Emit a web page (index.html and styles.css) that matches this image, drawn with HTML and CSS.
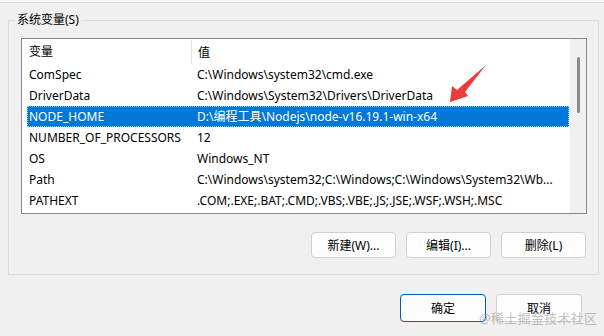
FILE: index.html
```html
<html>
<head>
<meta charset="utf-8">
<link rel="stylesheet" href="styles.css">
</head>
<body>
<div class="top-rule"></div>
<fieldset class="group">
    <legend>系统变量(S)</legend>
    <div class="listbox">
        <div class="list">
            <div class="list-head">
                <div class="col-name">变量</div>
                <div class="col-value">值</div>
            </div>
            <div class="row"><div class="col-name">ComSpec</div><div class="col-value">C:\Windows\system32\cmd.exe</div></div>
            <div class="row"><div class="col-name">DriverData</div><div class="col-value">C:\Windows\System32\Drivers\DriverData</div></div>
            <div class="row selected"><div class="col-name">NODE_HOME</div><div class="col-value">D:\编程工具\Nodejs\node-v16.19.1-win-x64</div></div>
            <div class="row"><div class="col-name">NUMBER_OF_PROCESSORS</div><div class="col-value">12</div></div>
            <div class="row"><div class="col-name">OS</div><div class="col-value">Windows_NT</div></div>
            <div class="row"><div class="col-name">Path</div><div class="col-value">C:\Windows\system32;C:\Windows;C:\Windows\System32\Wb...</div></div>
            <div class="row"><div class="col-name">PATHEXT</div><div class="col-value">.COM;.EXE;.BAT;.CMD;.VBS;.VBE;.JS;.JSE;.WSF;.WSH;.MSC</div></div>
        </div>
        <div class="scrollbar"><div class="thumb"></div></div>
    </div>
    <div class="btn-row">
        <button class="btn">新建(W)...</button>
        <button class="btn">编辑(I)...</button>
        <button class="btn">删除(L)</button>
    </div>
</fieldset>
<div class="btn-row dialog">
    <button class="btn primary">确定</button>
    <button class="btn">取消</button>
</div>
<svg class="arrow" width="604" height="336" viewBox="0 0 604 336">
    <polygon points="486,65 465,92 468,96 450,102 452,86 457,90" fill="#ee3a3a"/>
</svg>
<div class="watermark">@稀土掘金技术社区</div>
</body>
</html>
```

FILE: styles.css
```css
body {
    margin: 0;
    width: 604px;
    height: 336px;
    overflow: hidden;
    position: relative;
    background: #f0f0f0;
    color: #000;
    font: 12px "Noto Sans", "Noto Sans CJK SC", sans-serif;
}

.top-rule {
    height: 2px;
    background: #f7f7f7;
    border-bottom: 1px solid #dcdcdc;
}

.group {
    margin: 9px 5px 0 8px;
    padding: 10px 11px 16px 12px;
    border: 1px solid #dcdcdc;
    border-radius: 0;
}
.group legend {
    margin-left: -6px;
    padding: 0 2px;
    line-height: 16px;
}

.listbox {
    display: flex;
    height: 174px;
    border: 1px solid #828790;
    background: #fff;
}
.list {
    flex: 1;
    overflow: hidden;
}
.list-head {
    display: flex;
    height: 25px;
    align-items: center;
    padding-left: 7px;
}
.list-head .col-name {
    width: 162px;
    height: 24px;
    line-height: 24px;
    border-right: 1px solid #e5e5e5;
}
.list-head .col-value {
    padding-left: 6px;
}
.row {
    display: flex;
    height: 21px;
    line-height: 22px;
    margin-left: 5px;
    padding-left: 2px;
    box-sizing: border-box;
    white-space: nowrap;
}
.row .col-name {
    width: 168px;
}
.row .col-value {
    flex: 1;
    overflow: hidden;
}
.row.selected {
    background: #0078d7;
    color: #fff;
    outline: 1px dotted #9cc9ee;
    outline-offset: -1px;
}

.scrollbar {
    width: 17px;
    background: #f0f0f0;
    border-left: 1px solid #fafafa;
    display: flex;
    justify-content: center;
    padding-top: 18px;
    box-sizing: border-box;
}
.thumb {
    width: 3px;
    height: 56px;
    border-radius: 2px;
    background: #8a8a8a;
}

.btn-row {
    display: flex;
    justify-content: flex-end;
    gap: 10px;
    margin-top: 18px;
    padding-right: 1px;
}
.btn {
    width: 85px;
    height: 26px;
    background: #fdfdfd;
    border: 1px solid #d0d0d0;
    border-radius: 4px;
    font: inherit;
    color: #000;
    padding: 0;
}
.dialog {
    margin-top: 19px;
    padding-right: 22px;
}
.dialog .btn {
    height: 28px;
    width: 86px;
}
.btn.primary {
    border-color: #005fb8;
}

.arrow {
    position: absolute;
    left: 0;
    top: 0;
    pointer-events: none;
}
.watermark {
    position: absolute;
    left: 479px;
    top: 309px;
    font-size: 13px;
    line-height: 18px;
    color: rgba(140, 140, 140, 0.55);
    letter-spacing: 0.3px;
}
```
